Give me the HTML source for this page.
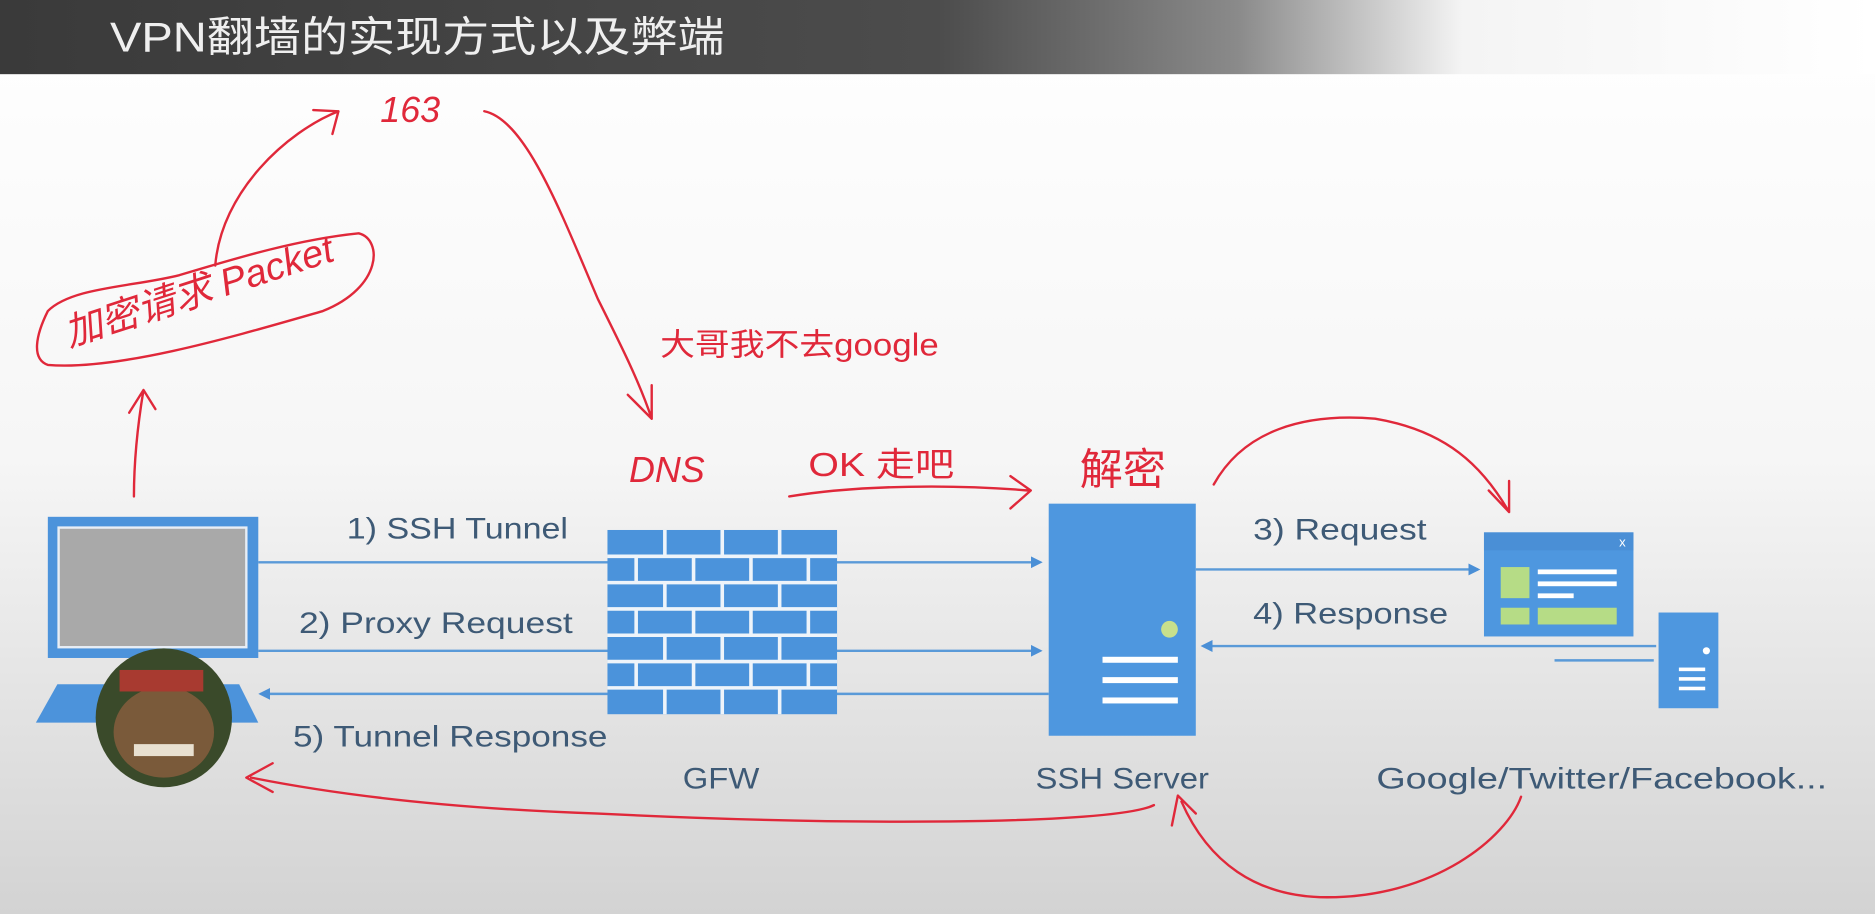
<!DOCTYPE html>
<html><head><meta charset="utf-8"><style>
html,body{margin:0;padding:0;width:1875px;height:914px;overflow:hidden;background:#fff}
svg{display:block}
.t{font-family:"Liberation Sans","DejaVu Sans",sans-serif;fill:#3e5a76;font-size:25px}
.r{font-family:"Liberation Sans","Noto Sans CJK SC",sans-serif;fill:#e0283a}
.rl{fill:none;stroke:#e0283a;stroke-width:2;stroke-linecap:round;stroke-linejoin:round}
</style></head><body>
<svg width="1875" height="914" viewBox="0 0 1568 764" preserveAspectRatio="none" xmlns="http://www.w3.org/2000/svg">
<defs>
<linearGradient id="bg" x1="0" y1="0" x2="0" y2="1">
<stop offset="0" stop-color="#ffffff"/><stop offset="0.5" stop-color="#f6f6f6"/><stop offset="1" stop-color="#d3d3d3"/></linearGradient>
<linearGradient id="hd" x1="0" y1="0" x2="1" y2="0">
<stop offset="0" stop-color="#3a3a3a"/><stop offset="0.5" stop-color="#4c4c4c"/><stop offset="0.66" stop-color="#8a8a8a"/><stop offset="0.78" stop-color="#f4f4f4"/><stop offset="1" stop-color="#ffffff"/></linearGradient>
<marker id="ar" markerWidth="10" markerHeight="10" refX="8" refY="5" orient="auto" markerUnits="userSpaceOnUse"><path d="M0,0 L10,5 L0,10 z" fill="#4a8fd6"/></marker>
</defs>
<rect width="1568" height="764" fill="url(#bg)"/>
<rect width="1568" height="62" fill="url(#hd)"/>
<text x="92" y="43" font-family="Liberation Sans,Noto Sans CJK SC,sans-serif" font-size="35" fill="#efefef" textLength="514" lengthAdjust="spacingAndGlyphs">VPN翻墙的实现方式以及弊端</text>

<!-- laptop -->
<rect x="40" y="432" width="176" height="118" fill="#4c93db"/>
<rect x="49" y="441" width="157" height="100" fill="#a9a9a9" stroke="#e8eef5" stroke-width="2"/>
<path d="M48,572 L200,572 L216,604 L30,604 Z" fill="#4c93db"/>
<ellipse cx="137" cy="600" rx="57" ry="58" fill="#3a4a2a"/>
<ellipse cx="137" cy="612" rx="42" ry="38" fill="#7a5a3a"/>
<rect x="100" y="560" width="70" height="18" fill="#a83a30"/>
<rect x="112" y="622" width="50" height="10" fill="#e8e0d0"/>

<!-- lines -->
<g stroke="#5a9ad8" stroke-width="2" fill="none">
<line x1="216" y1="470" x2="870" y2="470" marker-end="url(#ar)"/>
<line x1="216" y1="544" x2="870" y2="544" marker-end="url(#ar)"/>
<line x1="877" y1="580" x2="218" y2="580" marker-end="url(#ar)"/>
<line x1="1000" y1="476" x2="1236" y2="476" marker-end="url(#ar)"/>
<line x1="1385" y1="540" x2="1006" y2="540" marker-end="url(#ar)"/>
<line x1="1300" y1="552" x2="1383" y2="552"/>
</g>

<!-- wall -->
<rect x="508" y="443" width="192" height="154" fill="#4b93db"/>
<g stroke="#eef4fa" stroke-width="3">
<line x1="508" y1="465" x2="700" y2="465"/><line x1="508" y1="487" x2="700" y2="487"/>
<line x1="508" y1="509" x2="700" y2="509"/><line x1="508" y1="531" x2="700" y2="531"/>
<line x1="508" y1="553" x2="700" y2="553"/><line x1="508" y1="575" x2="700" y2="575"/>
<path d="M556,443v22M604,443v22M652,443v22M556,487v22M604,487v22M652,487v22M556,531v22M604,531v22M652,531v22M556,575v22M604,575v22M652,575v22"/>
<path d="M532,465v22M580,465v22M628,465v22M676,465v22M532,509v22M580,509v22M628,509v22M676,509v22M532,553v22M580,553v22M628,553v22M676,553v22"/>
</g>

<!-- server -->
<rect x="877" y="421" width="123" height="194" fill="#4e97df"/>
<circle cx="978" cy="526" r="7" fill="#c8e08c"/>
<rect x="922" y="549" width="63" height="5" fill="#fff"/>
<rect x="922" y="566" width="63" height="5" fill="#fff"/>
<rect x="922" y="583" width="63" height="5" fill="#fff"/>

<!-- browser -->
<rect x="1241" y="445" width="125" height="87" fill="#4e97df"/>
<rect x="1241" y="445" width="125" height="15" fill="#4a8fd6"/>
<text x="1354" y="457" font-size="11" fill="#fff" font-family="Liberation Sans,sans-serif">x</text>
<rect x="1255" y="474" width="24" height="26" fill="#b6dc86"/>
<rect x="1286" y="476" width="66" height="4" fill="#fff"/>
<rect x="1286" y="486" width="66" height="4" fill="#fff"/>
<rect x="1286" y="496" width="30" height="4" fill="#fff"/>
<rect x="1255" y="508" width="24" height="14" fill="#b6dc86"/>
<rect x="1286" y="508" width="66" height="14" fill="#b6dc86"/>
<!-- small server -->
<rect x="1387" y="512" width="50" height="80" fill="#4e97df"/>
<circle cx="1427" cy="544" r="3" fill="#fff"/>
<rect x="1404" y="558" width="22" height="3" fill="#fff"/>
<rect x="1404" y="566" width="22" height="3" fill="#fff"/>
<rect x="1404" y="574" width="22" height="3" fill="#fff"/>

<!-- labels -->
<text class="t" x="290" y="450" textLength="185" lengthAdjust="spacingAndGlyphs">1) SSH Tunnel</text>
<text class="t" x="250" y="529" textLength="229" lengthAdjust="spacingAndGlyphs">2) Proxy Request</text>
<text class="t" x="245" y="624" textLength="263" lengthAdjust="spacingAndGlyphs">5) Tunnel Response</text>
<text class="t" x="571" y="659" textLength="64" lengthAdjust="spacingAndGlyphs">GFW</text>
<text class="t" x="866" y="659" textLength="145" lengthAdjust="spacingAndGlyphs">SSH Server</text>
<text class="t" x="1151" y="659" textLength="377" lengthAdjust="spacingAndGlyphs">Google/Twitter/Facebook...</text>
<text class="t" x="1048" y="451" textLength="145" lengthAdjust="spacingAndGlyphs">3) Request</text>
<text class="t" x="1048" y="521" textLength="163" lengthAdjust="spacingAndGlyphs">4) Response</text>

<!-- red annotations -->
<path class="rl" d="M112,415 C112,380 116,350 120,326 M108,345 L120,326 L130,342"/>
<path class="rl" d="M40,260 C30,280 26,300 40,305 C100,310 200,280 270,260 C320,240 320,200 300,195 C250,200 200,215 150,230 C110,240 60,240 40,260 Z"/>
<path class="rl" d="M180,222 C185,160 240,110 283,93 M262,92 L283,93 L278,112"/>
<path class="rl" d="M405,93 C440,100 470,180 500,250 C520,290 535,320 545,350 M525,330 L545,350 L545,322"/>
<path class="rl" d="M660,415 C720,405 800,405 860,410 M845,398 L862,410 L845,425"/>
<path class="rl" d="M1015,405 C1040,360 1090,345 1150,350 C1210,360 1240,390 1262,428 M1245,410 L1262,428 L1262,402"/>
<path class="rl" d="M965,673 C930,690 700,690 500,680 C350,675 260,660 210,650 M228,638 L206,650 L228,662"/>
<path class="rl" d="M1272,666 C1260,700 1200,750 1110,750 C1050,750 1010,720 988,670 M980,690 L985,665 L1000,680"/>
<text class="r" x="318" y="102" font-size="30" font-style="italic">163</text>
<text class="r" x="58" y="290" font-size="32" transform="rotate(-18 58 290)" font-style="italic">加密请求 Packet</text>
<text class="r" x="552" y="297" font-size="26" textLength="233" lengthAdjust="spacingAndGlyphs">大哥我不去google</text>
<text class="r" x="526" y="403" font-size="30" font-style="italic">DNS</text>
<text class="r" x="676" y="398" font-size="28" textLength="122" lengthAdjust="spacingAndGlyphs">OK 走吧</text>
<text class="r" x="903" y="405" font-size="36">解密</text>
</svg>
</body></html>
